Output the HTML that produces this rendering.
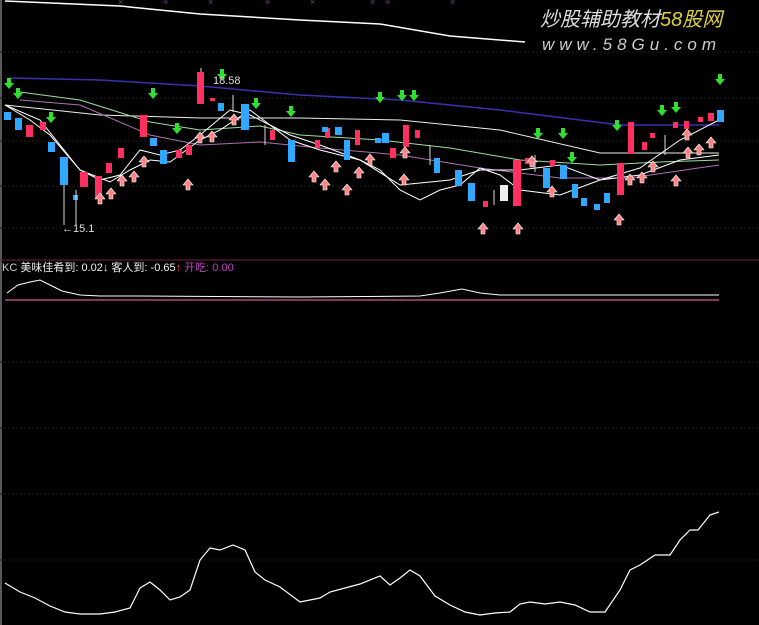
<!DOCTYPE html><html><head><meta charset="utf-8"><style>
html,body{margin:0;padding:0;background:#000;width:759px;height:625px;overflow:hidden}
svg{display:block}
text{font-family:"Liberation Sans","Noto Sans CJK SC",sans-serif}
</style></head><body>
<svg width="759" height="625" viewBox="0 0 759 625">
<rect width="759" height="625" fill="#000"/>
<line x1="1" y1="0" x2="1" y2="625" stroke="#777" stroke-width="1.5"/>
<g stroke="#1c1c1c" stroke-dasharray="2,2">
<line x1="0" y1="52" x2="759" y2="52"/><line x1="0" y1="98" x2="759" y2="98"/>
<line x1="0" y1="141" x2="759" y2="141"/><line x1="0" y1="186" x2="759" y2="186"/>
<line x1="0" y1="228" x2="759" y2="228"/><line x1="0" y1="362" x2="759" y2="362"/>
<line x1="0" y1="428" x2="759" y2="428"/><line x1="0" y1="494" x2="759" y2="494"/>
<line x1="0" y1="560" x2="759" y2="560"/></g>
<line x1="0" y1="260" x2="759" y2="260" stroke="#7a2040"/>
<!-- top white line -->
<polyline points="5,1 120,6 200,14 300,20 380,24 450,36 525,42" fill="none" stroke="#fff" stroke-width="1.5"/>
<g fill="#7b3a8a" font-size="9"><text x="118" y="5">×</text><text x="163" y="5">×</text><text x="208" y="5">×</text><text x="265" y="5">×</text><text x="310" y="5">×</text><text x="370" y="5">×</text><text x="385" y="5">×</text><text x="450" y="5">×</text></g>
<text x="540" y="26" font-size="20" fill="#ddd" font-style="italic">炒股辅助教材<tspan fill="#e0d040">58股网</tspan></text>
<text x="542" y="50" font-size="17" fill="#ccc" font-style="italic" letter-spacing="5">www.58Gu.com</text>
<!-- MA lines -->
<polyline points="10,78 100,80 200,86 300,95 400,100 500,110 620,125 719,125" fill="none" stroke="#3a30b0" stroke-width="1.5"/>
<polyline points="5,105 100,115 200,118 300,118 400,120 500,130 600,153 719,153" fill="none" stroke="#eee" stroke-width="1"/>
<polyline points="20,92 80,100 150,122 200,130 260,126 300,135 380,140 450,148 520,160 600,165 660,162 719,160" fill="none" stroke="#9fdc9f" stroke-width="1"/>
<polyline points="20,100 80,105 150,135 200,145 260,142 320,148 400,155 480,168 560,178 630,178 719,165" fill="none" stroke="#b070b0" stroke-width="1"/>
<polyline points="5,105 40,120 80,170 110,182 130,170 150,160 170,162 200,140 220,130 250,110 270,125 290,135 320,145 360,160 400,185 430,182 450,180 480,170 520,170 560,165 600,180 640,175 680,160 719,155" fill="none" stroke="#fff" stroke-width="1"/>
<polyline points="5,105 30,120 50,135 80,170 100,180 120,175 140,150 160,155 180,150 200,135 230,110 250,115 270,125 290,140 320,150 360,160 380,170 400,190 420,200 440,190 460,185 480,168 500,175 520,190 560,195 600,180 640,168 680,140 719,120" fill="none" stroke="#fff" stroke-width="1"/>
<!-- candles -->
<g>
<g fill="#ff3060"><rect x="26" y="125" width="7" height="12"/><rect x="40" y="122" width="6" height="8"/><rect x="80" y="172" width="8" height="15"/><rect x="95" y="176" width="7" height="22"/><rect x="106" y="163" width="6" height="10"/><rect x="118" y="148" width="6" height="10"/><rect x="140" y="115" width="7" height="22"/><rect x="176" y="150" width="6" height="8"/><rect x="186" y="145" width="6" height="10"/><rect x="197" y="72" width="7" height="32"/><rect x="210" y="98" width="5" height="3"/><rect x="270" y="130" width="5" height="10"/><rect x="315" y="140" width="5" height="8"/><rect x="325" y="128" width="5" height="10"/><rect x="355" y="130" width="5" height="15"/><rect x="390" y="148" width="6" height="10"/><rect x="403" y="125" width="6" height="22"/><rect x="415" y="130" width="5" height="8"/><rect x="483" y="201" width="5" height="6"/><rect x="513" y="160" width="8" height="46"/><rect x="525" y="158" width="5" height="6"/><rect x="550" y="160" width="5" height="6"/><rect x="617" y="163" width="7" height="32"/><rect x="628" y="122" width="6" height="32"/><rect x="642" y="142" width="5" height="8"/><rect x="650" y="133" width="5" height="5"/><rect x="673" y="122" width="5" height="6"/><rect x="684" y="121" width="5" height="8"/><rect x="698" y="117" width="5" height="5"/><rect x="708" y="113" width="6" height="8"/></g>
<g fill="#30a8ff"><rect x="4" y="112" width="7" height="8"/><rect x="15" y="118" width="7" height="12"/><rect x="48" y="142" width="7" height="10"/><rect x="60" y="157" width="8" height="28"/><rect x="73" y="195" width="5" height="5"/><rect x="150" y="138" width="7" height="8"/><rect x="160" y="150" width="7" height="14"/><rect x="218" y="103" width="6" height="8"/><rect x="241" y="104" width="8" height="26"/><rect x="288" y="140" width="7" height="22"/><rect x="322" y="127" width="6" height="5"/><rect x="335" y="127" width="7" height="8"/><rect x="344" y="140" width="6" height="20"/><rect x="375" y="138" width="6" height="5"/><rect x="382" y="133" width="7" height="10"/><rect x="434" y="158" width="6" height="15"/><rect x="455" y="170" width="7" height="16"/><rect x="468" y="183" width="7" height="18"/><rect x="543" y="168" width="7" height="20"/><rect x="560" y="165" width="7" height="14"/><rect x="572" y="184" width="6" height="14"/><rect x="581" y="198" width="6" height="8"/><rect x="594" y="204" width="6" height="6"/><rect x="604" y="193" width="6" height="10"/><rect x="717" y="110" width="7" height="12"/></g>
<rect x="500" y="185" width="8" height="16" fill="#eee"/>
<g stroke="#ddd" stroke-width="1"><line x1="64" y1="185" x2="64" y2="225"/><line x1="76" y1="190" x2="76" y2="225"/><line x1="201" y1="68" x2="201" y2="72"/><line x1="233" y1="95" x2="233" y2="112"/><line x1="265" y1="125" x2="265" y2="145"/><line x1="430" y1="145" x2="430" y2="165"/><line x1="535" y1="155" x2="535" y2="172"/><line x1="494" y1="190" x2="494" y2="205"/><line x1="665" y1="135" x2="665" y2="155"/></g>
</g>
<!-- green arrows -->
<g fill="#30e030">
<path d="M7,78h4v5h3l-5,6-5,-6h3z"/><path d="M16,88h4v5h3l-5,6-5,-6h3z"/><path d="M49,112h4v5h3l-5,6-5,-6h3z"/><path d="M151,88h4v5h3l-5,6-5,-6h3z"/><path d="M175,123h4v5h3l-5,6-5,-6h3z"/><path d="M220,69h4v5h3l-5,6-5,-6h3z"/><path d="M254,98h4v5h3l-5,6-5,-6h3z"/><path d="M289,106h4v5h3l-5,6-5,-6h3z"/><path d="M378,92h4v5h3l-5,6-5,-6h3z"/><path d="M400,90h4v5h3l-5,6-5,-6h3z"/><path d="M412,90h4v5h3l-5,6-5,-6h3z"/><path d="M536,128h4v5h3l-5,6-5,-6h3z"/><path d="M561,128h4v5h3l-5,6-5,-6h3z"/><path d="M570,152h4v5h3l-5,6-5,-6h3z"/><path d="M615,120h4v5h3l-5,6-5,-6h3z"/><path d="M660,105h4v5h3l-5,6-5,-6h3z"/><path d="M674,102h4v5h3l-5,6-5,-6h3z"/><path d="M718,74h4v5h3l-5,6-5,-6h3z"/>
</g>
<!-- red up arrows -->
<g fill="#ff8080" stroke="#fff" stroke-width="0.6">
<path d="M109,199h4v-5h3l-5,-6-5,6h3z"/><path d="M98,204h4v-5h3l-5,-6-5,6h3z"/><path d="M120,186h4v-5h3l-5,-6-5,6h3z"/><path d="M132,182h4v-5h3l-5,-6-5,6h3z"/><path d="M142,167h4v-5h3l-5,-6-5,6h3z"/><path d="M186,190h4v-5h3l-5,-6-5,6h3z"/><path d="M198,143h4v-5h3l-5,-6-5,6h3z"/><path d="M210,142h4v-5h3l-5,-6-5,6h3z"/><path d="M232,125h4v-5h3l-5,-6-5,6h3z"/><path d="M312,182h4v-5h3l-5,-6-5,6h3z"/><path d="M323,190h4v-5h3l-5,-6-5,6h3z"/><path d="M334,172h4v-5h3l-5,-6-5,6h3z"/><path d="M345,195h4v-5h3l-5,-6-5,6h3z"/><path d="M357,178h4v-5h3l-5,-6-5,6h3z"/><path d="M368,165h4v-5h3l-5,-6-5,6h3z"/><path d="M402,185h4v-5h3l-5,-6-5,6h3z"/><path d="M403,158h4v-5h3l-5,-6-5,6h3z"/><path d="M481,234h4v-5h3l-5,-6-5,6h3z"/><path d="M516,234h4v-5h3l-5,-6-5,6h3z"/><path d="M530,167h4v-5h3l-5,-6-5,6h3z"/><path d="M550,197h4v-5h3l-5,-6-5,6h3z"/><path d="M617,225h4v-5h3l-5,-6-5,6h3z"/><path d="M628,185h4v-5h3l-5,-6-5,6h3z"/><path d="M640,183h4v-5h3l-5,-6-5,6h3z"/><path d="M651,172h4v-5h3l-5,-6-5,6h3z"/><path d="M674,186h4v-5h3l-5,-6-5,6h3z"/><path d="M686,158h4v-5h3l-5,-6-5,6h3z"/><path d="M697,155h4v-5h3l-5,-6-5,6h3z"/><path d="M709,148h4v-5h3l-5,-6-5,6h3z"/><path d="M685,140h4v-5h3l-5,-6-5,6h3z"/>
</g>
<text x="213" y="84" font-size="11" fill="#ddd">18.58</text>
<text x="62" y="232" font-size="11" fill="#ddd">←15.1</text>
<!-- indicator -->
<text x="2" y="271" font-size="11" fill="#ccc">KC <tspan fill="#eee">美味佳肴到: 0.02↓  客人到: -0.65</tspan><tspan fill="#ff4060">↑</tspan> <tspan fill="#c040c0">开吃: 0.00</tspan></text>
<line x1="5" y1="300" x2="719" y2="300" stroke="#ff70c0" stroke-width="1"/>
<polyline points="7,293 18,285 30,282 40,280 50,285 62,291 80,295 100,296 140,296 300,297 420,296 440,293 462,289 480,293 500,295 719,295" fill="none" stroke="#fff" stroke-width="1"/>
<!-- bottom line -->
<polyline points="5,583 20,592 35,598 50,606 65,612 80,614 100,614 115,612 130,608 140,588 150,582 160,590 170,600 180,597 190,590 200,560 210,548 220,550 233,545 245,550 255,572 265,580 280,587 300,602 320,598 330,592 345,588 360,584 380,576 390,585 400,578 410,570 420,576 435,596 450,605 465,612 480,615 495,613 510,612 520,604 530,602 545,604 560,602 575,605 590,612 605,612 620,590 630,570 640,565 655,555 670,555 680,540 690,530 698,530 710,515 719,512" fill="none" stroke="#fff" stroke-width="1.2"/>
</svg>
</body></html>
